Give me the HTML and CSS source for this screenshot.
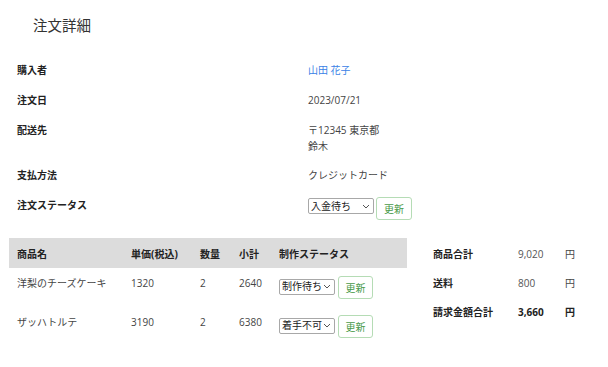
FILE: index.html
```html
<!DOCTYPE html>
<html lang="ja">
<head>
    <meta charset="UTF-8">
    <title>注文詳細</title>
    <link rel="stylesheet" href="styles.css">
</head>
<body>
    <div class="page">
        <h1 class="page-title">注文詳細</h1>

        <!-- 注文情報 -->
        <div class="info">
            <div class="info-row">
                <div class="info-label">購入者</div>
                <div class="info-value"><a class="buyer-link" href="#">山田 花子</a></div>
            </div>
            <div class="info-row">
                <div class="info-label">注文日</div>
                <div class="info-value">2023/07/21</div>
            </div>
            <div class="info-row">
                <div class="info-label">配送先</div>
                <div class="info-value">〒12345 東京都<br>鈴木</div>
            </div>
            <div class="info-row">
                <div class="info-label">支払方法</div>
                <div class="info-value">クレジットカード</div>
            </div>
            <div class="info-row">
                <div class="info-label">注文ステータス</div>
                <div class="info-value status-form">
                    <select class="status-select order-select">
                        <option>入金待ち</option>
                    </select>
                    <button type="button" class="btn-update">更新</button>
                </div>
            </div>
        </div>

        <!-- 商品一覧と合計 -->
        <div class="bottom">
            <table class="items">
                <thead>
                    <tr>
                        <th class="col-name">商品名</th>
                        <th class="col-price">単価(税込)</th>
                        <th class="col-qty">数量</th>
                        <th class="col-sub">小計</th>
                        <th>制作ステータス</th>
                    </tr>
                </thead>
                <tbody>
                    <tr>
                        <td>洋梨のチーズケーキ</td>
                        <td>1320</td>
                        <td>2</td>
                        <td>2640</td>
                        <td class="status-form">
                            <select class="status-select"><option>制作待ち</option></select>
                            <button type="button" class="btn-update">更新</button>
                        </td>
                    </tr>
                    <tr>
                        <td>ザッハトルテ</td>
                        <td>3190</td>
                        <td>2</td>
                        <td>6380</td>
                        <td class="status-form">
                            <select class="status-select"><option>着手不可</option></select>
                            <button type="button" class="btn-update">更新</button>
                        </td>
                    </tr>
                </tbody>
            </table>

            <table class="totals">
                <tr>
                    <th>商品合計</th>
                    <td class="amount">9,020</td>
                    <td class="yen">円</td>
                </tr>
                <tr>
                    <th>送料</th>
                    <td class="amount">800</td>
                    <td class="yen">円</td>
                </tr>
                <tr class="grand">
                    <th>請求金額合計</th>
                    <td class="amount">3,660</td>
                    <td class="yen">円</td>
                </tr>
            </table>
        </div>
    </div>
</body>
</html>
```

FILE: styles.css
```css
* {
    margin: 0;
    padding: 0;
    box-sizing: border-box;
}

body {
    font-family: "Open Sans", "Noto Sans CJK JP", sans-serif;
    font-size: 10px;
    color: #444;
    background: #fff;
}

.page { padding: 16px 9px 0 9px; }

.page-title { font-size: 14.5px; font-weight: 400; color: #333; margin-left: 24px; line-height: 20px; margin-bottom: 26px; }

/* 注文情報 */
.info { display: flex; flex-direction: column; gap: 14px; padding-left: 8px; }
.info-row { display: flex; align-items: flex-start; }
.info-row:nth-child(4) { margin-top: -1px; }
.info-label { width: 291px; font-weight: 700; color: #222; line-height: 16px; }
.info-value { line-height: 16px; }
.buyer-link { color: #3b82e6; text-decoration: none; }

.status-form { display: flex; align-items: flex-start; gap: 2px; }
.status-select {
    appearance: none;
    -webkit-appearance: none;
    font-family: inherit;
    font-size: 10px;
    line-height: 13px;
    color: #222;
    width: 56px;
    height: 16px;
    border: 1px solid #a8a8a8;
    border-radius: 2px;
    padding: 0 12px 0 2px;
    margin-top: 1px;
    background: #fff url("data:image/svg+xml,%3Csvg xmlns='http://www.w3.org/2000/svg' width='8' height='5' viewBox='0 0 8 5'%3E%3Cpath d='M1 1l3 3 3-3' fill='none' stroke='%23555' stroke-width='1'/%3E%3C/svg%3E") no-repeat right 3px center;
}
.order-select { width: 66px; }
.btn-update { font-family: inherit; font-size: 10px; color: #4a9a4a; background: #fff; border: 1px solid #b5dcb5; border-radius: 3px; width: 36px; height: 23px; }

/* 商品一覧 */
.bottom { display: flex; align-items: flex-start; gap: 18px; margin-top: 18px; }
.items { width: 398px; border-collapse: collapse; }
.items th { background: #dcdcdc; font-weight: 700; color: #222; text-align: left; height: 30px; padding: 0 0 0 8px; }
.items td { height: 39px; padding: 7px 0 0 8px; vertical-align: top; line-height: 16px; }
.items td.status-form { display: flex; align-items: center; gap: 3px; height: 39px; padding-top: 0; }
.items td.status-form .status-select { margin-top: -2px; }
.items .btn-update { width: 35px; }
.col-name { width: 114px; }
.col-price { width: 69px; }
.col-qty { width: 39px; }
.col-sub { width: 40px; }

/* 合計 */
.totals { border-collapse: collapse; margin-top: 1px; }
.totals th { text-align: left; font-weight: 700; color: #222; width: 93px; height: 29px; padding-left: 8px; }
.totals .amount { width: 47px; color: #555; }
.totals .yen { width: 30px; }
.totals .grand td { font-weight: 700; color: #222; }
```
